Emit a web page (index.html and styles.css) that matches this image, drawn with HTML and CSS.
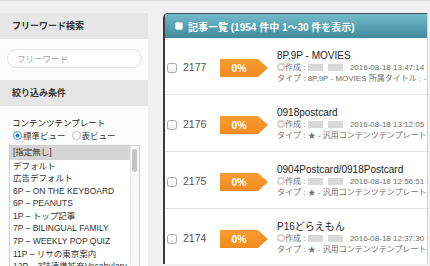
FILE: index.html
```html
<!DOCTYPE html>
<html lang="ja">
<head>
<meta charset="utf-8">
<title>記事一覧</title>
<link rel="stylesheet" href="styles.css">
</head>
<body>
<div class="page">
  <aside class="side">
    <div class="sec-head">フリーワード検索</div>
    <div class="search"><input class="input" type="text" placeholder="フリーワード"></div>
    <div class="sec-head">絞り込み条件</div>
    <div class="filter">
      <div class="label">コンテンツテンプレート</div>
      <div class="radios">
        <span class="radio on"></span><span class="rtext">標準ビュー</span>
        <span class="radio"></span><span class="rtext">表ビュー</span>
      </div>
      <div class="list">
        <div class="items">
          <div class="item sel">[指定無し]</div>
          <div class="item">デフォルト</div>
          <div class="item">広告デフォルト</div>
          <div class="item">6P – ON THE KEYBOARD</div>
          <div class="item">6P – PEANUTS</div>
          <div class="item">1P – トップ記事</div>
          <div class="item">7P – BILINGUAL FAMILY</div>
          <div class="item">7P – WEEKLY POP QUIZ</div>
          <div class="item">11P – リサの東京案内</div>
          <div class="item">12P – 3誌連携拡充Vocabulary</div>
        </div>
        <div class="scroll"><div class="thumb"></div></div>
      </div>
    </div>
  </aside>
  <main class="main">
    <section class="panel">
      <div class="panel-head"><span class="hcb"></span><span>記事一覧 (1954 件中 1～30 件を表示)</span></div>
      <div class="row">
        <span class="cb"></span>
        <span class="num">2177</span>
        <span class="tag">0%</span>
        <div class="info">
          <div class="title">8P,9P - MOVIES</div>
          <div class="meta">◎作成 : <span class="blk"></span><span class="blk"></span> 2016-08-18 13:47:14 ◎更新 : 2016-08-18</div>
          <div class="meta">タイプ : 8P,9P - MOVIES 所属タイトル : -</div>
        </div>
      </div>
      <div class="row">
        <span class="cb"></span>
        <span class="num">2176</span>
        <span class="tag">0%</span>
        <div class="info">
          <div class="title">0918postcard</div>
          <div class="meta">◎作成 : <span class="blk"></span><span class="blk"></span> 2016-08-18 13:12:05 ◎更新 : 2016-08-18</div>
          <div class="meta">タイプ : ★ - 汎用コンテンツテンプレート 所属タイトル : -</div>
        </div>
      </div>
      <div class="row">
        <span class="cb"></span>
        <span class="num">2175</span>
        <span class="tag">0%</span>
        <div class="info">
          <div class="title">0904Postcard/0918Postcard</div>
          <div class="meta">◎作成 : <span class="blk"></span><span class="blk"></span> 2016-08-18 12:56:51 ◎更新 : 2016-08-18</div>
          <div class="meta">タイプ : ★ - 汎用コンテンツテンプレート 所属タイトル : -</div>
        </div>
      </div>
      <div class="row">
        <span class="cb"></span>
        <span class="num">2174</span>
        <span class="tag">0%</span>
        <div class="info">
          <div class="title">P16どらえもん</div>
          <div class="meta">◎作成 : <span class="blk"></span><span class="blk"></span> 2016-08-18 12:37:30 ◎更新 : 2016-08-18</div>
          <div class="meta">タイプ : ★ - 汎用コンテンツテンプレート 所属タイトル : -</div>
        </div>
      </div>
    </section>
  </main>
</div>
</body>
</html>
```

FILE: styles.css
```css
* { box-sizing: border-box; }
html, body { margin: 0; padding: 0; }
body {
  width: 430px;
  height: 266px;
  overflow: hidden;
  background: #f1f1f1;
  border-top: 1px solid #dcdcdc;
  font-family: "Liberation Sans", "Noto Sans CJK JP", sans-serif;
  color: #333;
}
.page {
  display: flex;
  padding-top: 12px;
  height: 265px;
}
.side {
  width: 148px;
  flex: none;
  background: #fcfcfc;
  height: 100%;
}
.sec-head {
  height: 26px;
  line-height: 26px;
  background: #e6e6e6;
  padding-left: 12px;
  font-size: 9px;
  font-weight: bold;
  color: #333;
}
.search {
  padding: 10px 6px 12px 7px;
}
.input {
  display: block;
  width: 135px;
  height: 19px;
  border: 1px solid #e3e3e3;
  border-radius: 10px;
  background: #fff;
  padding: 0 0 0 9px;
  font-family: "Liberation Sans", "Noto Sans CJK JP", sans-serif;
  font-size: 8.5px;
  outline: none;
}
.input::placeholder { color: #a8a8a8; }
.filter {
  padding: 12px 0 0 9px;
}
.label {
  font-size: 8.5px;
  line-height: 10px;
  padding-left: 3px;
  color: #222;
}
.radios {
  display: flex;
  align-items: center;
  height: 12px;
  margin-top: 1px;
  padding-left: 4px;
  font-size: 8.5px;
  color: #333;
}
.radio {
  width: 9px;
  height: 9px;
  border-radius: 50%;
  border: 1px solid #bdbdbd;
  background: #fff;
  flex: none;
}
.radio.on {
  border-color: #3d8fe0;
  background: radial-gradient(circle, #2f7fd8 0, #2f7fd8 1.8px, #fff 2.3px);
}
.rtext { margin: 0 6px 0 1px; }
.list {
  display: flex;
  width: 131px;
  height: 130px;
  margin-top: 4px;
  border: 1px solid #cfcfcf;
  border-bottom: none;
  background: #fff;
  overflow: hidden;
}
.items {
  flex: 1;
  min-width: 0;
  font-size: 8.5px;
  color: #333;
}
.item {
  line-height: 12.6px;
  padding-left: 3px;
  white-space: nowrap;
  overflow: hidden;
}
.item.sel {
  background: #d5d5d5;
  line-height: 13.5px;
}
.scroll {
  width: 9px;
  flex: none;
  background: #f7f7f7;
  border-left: 1px solid #ececec;
  padding: 3px 1px 0 1px;
}
.thumb {
  width: 5px;
  height: 23px;
  border-radius: 3px;
  background: #c3c3c3;
}
.main {
  flex: 1;
  padding: 0 2px 0 15px;
  height: 251px;
  overflow: hidden;
}
.panel {
  height: 100%;
  background: #fff;
  border-left: 2px solid #3a3a3a;
  border-top: 1px solid #3f5a62;
  border-right: 1px solid #d2d2d2;
  border-top-left-radius: 5px;
  overflow: hidden;
}
.panel-head {
  height: 24px;
  display: flex;
  align-items: center;
  padding-left: 10px;
  background: linear-gradient(#74bccc, #3f8a9c);
  color: #fff;
  font-size: 10px;
  font-weight: bold;
  white-space: nowrap;
}
.hcb {
  width: 8px;
  height: 8px;
  border-radius: 2px;
  background: #fff;
  border: 1px solid #d8d8d8;
  margin-right: 5px;
  flex: none;
}
.row {
  display: flex;
  align-items: center;
  height: 57px;
  border-bottom: 1px solid #e6e6e6;
  white-space: nowrap;
}
.cb {
  width: 10px;
  height: 10px;
  margin-left: 2px;
  margin-top: 3px;
  border: 1px solid #ababab;
  border-radius: 2.5px;
  background: linear-gradient(#fff, #ececec);
  flex: none;
}
.num {
  width: 37px;
  margin-left: 6px;
  margin-top: 1px;
  font-size: 10.5px;
  color: #555;
  flex: none;
}
.tag {
  width: 48px;
  height: 18px;
  margin-top: 4px;
  line-height: 18px;
  padding-right: 10px;
  text-align: center;
  font-size: 10.5px;
  font-weight: bold;
  color: #fff;
  background: linear-gradient(#f89b33, #f28b1c);
  clip-path: polygon(0 0, 38px 0, 48px 50%, 38px 100%, 0 100%);
  flex: none;
}
.info {
  flex: 1;
  margin-left: 9px;
  min-width: 0;
  overflow: hidden;
}
.title {
  font-size: 10px;
  line-height: 13px;
  color: #222;
}
.meta {
  font-size: 8px;
  line-height: 11px;
  color: #6f6f6f;
  overflow: hidden;
}
.blk {
  display: inline-block;
  width: 15px;
  height: 7px;
  margin-right: 5px;
  vertical-align: -1px;
  background: #d9d9d9;
}
```
